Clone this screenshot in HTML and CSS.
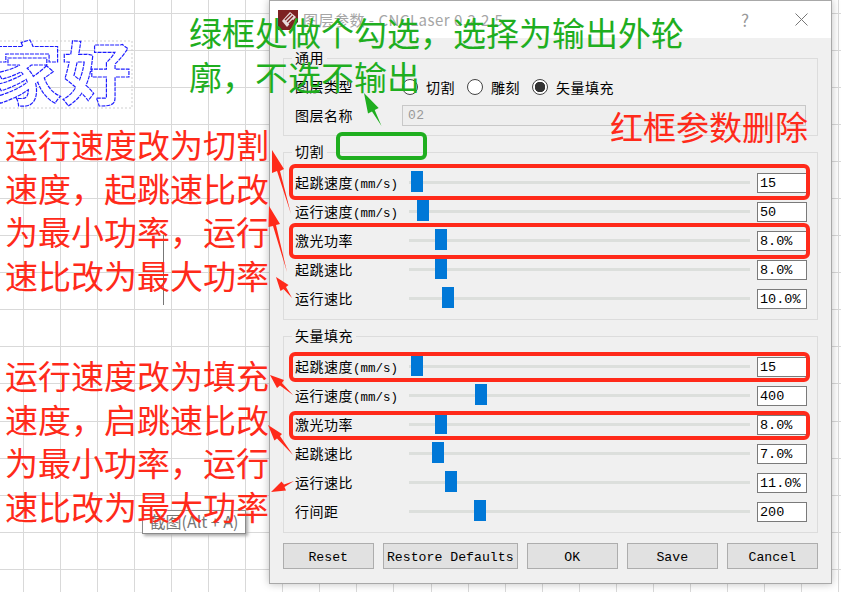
FILE: index.html
```html
<!DOCTYPE html>
<html lang="zh-CN">
<head>
    <meta charset="UTF-8">
    <title>图层参数 - CNCLaser</title>
    <link rel="stylesheet" href="styles.css">
</head>
<body>
    <div class="canvas">
        <svg class="shape" width="140" height="120" viewBox="0 0 140 120">
            <rect class="shape-box" x="-4" y="41" width="136" height="67"></rect>
            <text class="shape-text" x="-7" y="100">家好</text>
        </svg>
        <div class="cursor-line"></div>
        <div class="tip">截图(Alt + A)</div>
    </div>

    <div class="dialog">
        <div class="titlebar">
            <svg class="app-icon" width="20" height="20" viewBox="0 0 20 20">
                <rect width="20" height="20" fill="#7d2222"></rect>
                <path d="M4 11 L12 2 L18 7 L9 17 Z" fill="#e8dcdc"></path>
                <path d="M7 10 L13 4 M9 12 L15 6 M11 14 L15 10" stroke="#7d2222" stroke-width="1.4"></path>
                <path d="M20 12 L20 20 L12 20 Z" fill="#fff"></path>
            </svg>
            <span class="title">图层参数 - CNCLaser 0.2.2.5</span>
            <span class="help">?</span>
            <svg class="close" width="13" height="13" viewBox="0 0 13 13">
                <path d="M.5 .5 L12.5 12.5 M12.5 .5 L.5 12.5" stroke="#777" fill="none"></path>
            </svg>
        </div>

        <div class="body">
            <div class="group group-general">
                <span class="legend">通用</span>
                <div class="row">
                    <span class="label">图层类型</span>
                    <div class="radios">
                        <span class="radio"></span><span>切割</span>
                        <span class="radio"></span><span>雕刻</span>
                        <span class="radio checked"></span><span>矢量填充</span>
                    </div>
                </div>
                <div class="row">
                    <span class="label">图层名称</span>
                    <div class="name-input">02</div>
                </div>
            </div>

            <div class="group">
                <span class="legend">切割</span>
                <div class="row">
                    <span class="label">起跳速度<span class="mono">(mm/s)</span></span>
                    <div class="track"><div class="handle" style="left: 2px"></div></div>
                    <div class="value">15</div>
                </div>
                <div class="row">
                    <span class="label">运行速度<span class="mono">(mm/s)</span></span>
                    <div class="track"><div class="handle" style="left: 8px"></div></div>
                    <div class="value">50</div>
                </div>
                <div class="row">
                    <span class="label">激光功率</span>
                    <div class="track"><div class="handle" style="left: 26px"></div></div>
                    <div class="value">8.0%</div>
                </div>
                <div class="row">
                    <span class="label">起跳速比</span>
                    <div class="track"><div class="handle" style="left: 26px"></div></div>
                    <div class="value">8.0%</div>
                </div>
                <div class="row">
                    <span class="label">运行速比</span>
                    <div class="track"><div class="handle" style="left: 33px"></div></div>
                    <div class="value">10.0%</div>
                </div>
            </div>

            <div class="group">
                <span class="legend">矢量填充</span>
                <div class="row">
                    <span class="label">起跳速度<span class="mono">(mm/s)</span></span>
                    <div class="track"><div class="handle" style="left: 2px"></div></div>
                    <div class="value">15</div>
                </div>
                <div class="row">
                    <span class="label">运行速度<span class="mono">(mm/s)</span></span>
                    <div class="track"><div class="handle" style="left: 66px"></div></div>
                    <div class="value">400</div>
                </div>
                <div class="row">
                    <span class="label">激光功率</span>
                    <div class="track"><div class="handle" style="left: 26px"></div></div>
                    <div class="value">8.0%</div>
                </div>
                <div class="row">
                    <span class="label">起跳速比</span>
                    <div class="track"><div class="handle" style="left: 23px"></div></div>
                    <div class="value">7.0%</div>
                </div>
                <div class="row">
                    <span class="label">运行速比</span>
                    <div class="track"><div class="handle" style="left: 36px"></div></div>
                    <div class="value">11.0%</div>
                </div>
                <div class="row">
                    <span class="label">行间距</span>
                    <div class="track"><div class="handle" style="left: 65px"></div></div>
                    <div class="value">200</div>
                </div>
            </div>

            <div class="buttons">
                <button class="btn">Reset</button>
                <button class="btn btn-wide">Restore Defaults</button>
                <button class="btn">OK</button>
                <button class="btn">Save</button>
                <button class="btn">Cancel</button>
            </div>
        </div>
    </div>

    <!-- annotations drawn over the screenshot -->
    <div class="note green note-top">绿框处做个勾选，选择为输出外轮<br>廓，不选不输出</div>
    <div class="note red note-delete">红框参数删除</div>
    <div class="note red note-cut">运行速度改为切割<br>速度，起跳速比改<br>为最小功率，运行<br>速比改为最大功率</div>
    <div class="note red note-fill">运行速度改为填充<br>速度，启跳速比改<br>为最小功率，运行<br>速比改为最大功率</div>

    <div class="mark mark-green"></div>
    <div class="mark mark-red mark-1"></div>
    <div class="mark mark-red mark-2"></div>
    <div class="mark mark-red mark-3"></div>
    <div class="mark mark-red mark-4"></div>

    <svg class="arrows" width="841" height="592" viewBox="0 0 841 592">
        <polygon class="arrow-green" points="364,93 378.7,108 374.7,110 381.5,126 372,111.4 368,113.5"></polygon>
        <polygon class="arrow-red" points="272,150 284,169 280,171 291,214 277,171 272,173"></polygon>
        <polygon class="arrow-red" points="269,206 280,224 276,225 287,272 273,226 268.5,227"></polygon>
        <polygon class="arrow-red" points="276,277 288.5,285 286,287 292,298 283.5,289 280.5,291"></polygon>
        <polygon class="arrow-red" points="270,375 284,380 282,383 293,395 280,385.5 277,388"></polygon>
        <polygon class="arrow-red" points="268,425 282,434 280,436 293,455 277,438.5 274.4,440.5"></polygon>
        <polygon class="arrow-red" points="271,492 281.5,481.5 284,484.5 294,481 284.5,487 286,490.5"></polygon>
    </svg>
</body>
</html>
```

FILE: styles.css
```css
html, body{
    margin: 0;
    height: 100%;
}

body{
    position: relative;
    width: 841px;
    height: 592px;
    overflow: hidden;
    background: #fff;
    font-family: "Noto Sans CJK SC", sans-serif;
}

.canvas{
    position: absolute;
    inset: 0;
    background-image:
        repeating-linear-gradient(to right, #d9d9d9 0, #d9d9d9 1px, transparent 1px, transparent 37.05px),
        repeating-linear-gradient(to bottom, #d9d9d9 0, #d9d9d9 1px, transparent 1px, transparent 37.05px);
    background-position: 23px 13px;
}

.shape{
    position: absolute;
    left: 0;
    top: 0;
}

.shape-box{
    fill: none;
    stroke: #cfcfcf;
    stroke-dasharray: 2 2;
}

.shape-text{
    font-family: "Noto Sans CJK SC", sans-serif;
    font-size: 69px;
    font-weight: 700;
    fill: #fff;
    stroke: #1c1cff;
    stroke-width: 1.2;
    stroke-dasharray: 4 1;
}

.cursor-line{
    position: absolute;
    left: 163px;
    top: 235px;
    width: 1px;
    height: 70px;
    background: #777;
}

.tip{
    position: absolute;
    left: 142px;
    top: 510px;
    width: 104px;
    height: 24px;
    box-sizing: border-box;
    background: #fff;
    border: 1px solid #8a8a8a;
    box-shadow: 2px 2px 3px #aaa;
    font-size: 16px;
    line-height: 21px;
    color: #777;
    text-align: center;
    white-space: nowrap;
}

/* dialog */
.dialog{
    position: absolute;
    left: 269px;
    top: 0;
    width: 563px;
    height: 584px;
    box-sizing: border-box;
    border: 1px solid #a8a8a8;
    background: #f0f0f0;
    box-shadow: 0 0 8px rgba(0, 0, 0, 0.25);
}

.titlebar{
    display: flex;
    align-items: center;
    height: 37px;
    padding: 0 23px 0 8px;
    background: #fff;
}

.app-icon{
    margin-right: 5px;
}

.title{
    flex: 1;
    font-size: 15px;
    letter-spacing: 0.5px;
    color: #a5a5a5;
}

.help{
    margin-right: 46px;
    font-size: 17px;
    color: #999;
}

.body{
    padding: 20px 13px 0;
}

.group{
    position: relative;
    margin-bottom: 16px;
    padding: 15px 0 6px;
    border: 1px solid #dcdcdc;
}

.group-general{
    height: 78px;
    box-sizing: border-box;
    padding-top: 13px;
}

.legend{
    position: absolute;
    left: 8px;
    top: -12px;
    padding: 0 3px;
    background: #f0f0f0;
    font-size: 14px;
    line-height: 20px;
    letter-spacing: 0.5px;
}

.row{
    display: flex;
    align-items: center;
    height: 29px;
    padding-left: 11px;
    font-size: 14px;
    letter-spacing: 0.5px;
}

.label{
    width: 114px;
    padding-bottom: 2px;
    white-space: nowrap;
}

.group-general .label{
    width: 107px;
}

.mono{
    font-family: "Liberation Mono", monospace;
    font-size: 12.5px;
    letter-spacing: 0;
}

.radios{
    display: flex;
    align-items: center;
    gap: 8px;
}

.radio{
    width: 14px;
    height: 14px;
    border: 1px solid #444;
    border-radius: 50%;
    background: #fff;
}

.radios span:nth-child(3), .radios span:nth-child(5){
    margin-left: 4px;
}

.radio.checked{
    background: radial-gradient(circle, #333 0, #333 5px, #fff 5.5px);
}

.name-input{
    width: 404px;
    height: 21px;
    box-sizing: border-box;
    padding-left: 5px;
    border: 1px solid #c8c8c8;
    background: #eee;
    font-family: "Liberation Mono", monospace;
    font-size: 13px;
    line-height: 19px;
    color: #999;
}

.track{
    position: relative;
    width: 341px;
    height: 3px;
    margin-right: 7px;
    background: #dcdfdc;
}

.handle{
    position: absolute;
    top: -10px;
    width: 12px;
    height: 21px;
    background: #0078d7;
}

.value{
    width: 50px;
    height: 20px;
    box-sizing: border-box;
    padding-left: 2px;
    border: 1px solid #7a7a7a;
    background: #fff;
    font-family: "Liberation Mono", monospace;
    font-size: 13.5px;
    line-height: 19px;
    letter-spacing: 0;
}

.buttons{
    display: flex;
    gap: 9.5px;
    margin-top: -6px;
}

.btn{
    width: 90.5px;
    height: 26px;
    padding: 2px 0 0;
    border: 1px solid #adadad;
    background: #e1e1e1;
    font-family: "Liberation Mono", monospace;
    font-size: 13.2px;
    color: #000;
}

.btn-wide{
    width: 134.5px;
}

/* annotations */
.note{
    position: absolute;
    font-size: 33px;
    line-height: 43.5px;
    white-space: nowrap;
}

.red{
    color: #ff2a1a;
}

.green{
    color: #1fae1f;
}

.note-top{
    left: 189px;
    top: 11px;
}

.note-delete{
    left: 610px;
    top: 105px;
}

.note-cut{
    left: 5px;
    top: 123px;
}

.note-fill{
    left: 5px;
    top: 354px;
}

.mark{
    position: absolute;
    box-sizing: border-box;
    border-radius: 6px;
}

.mark-green{
    left: 336px;
    top: 132px;
    width: 91px;
    height: 28px;
    border: 4px solid #1fae1f;
}

.mark-red{
    left: 289px;
    width: 521px;
    border: 4px solid #ff2a1a;
}

.mark-1{
    top: 164px;
    height: 36px;
}

.mark-2{
    top: 223px;
    height: 36px;
}

.mark-3{
    top: 352px;
    height: 30px;
}

.mark-4{
    top: 411px;
    height: 29px;
}

.arrows{
    position: absolute;
    left: 0;
    top: 0;
}

.arrow-red{
    fill: #ff2a1a;
}

.arrow-green{
    fill: #1fae1f;
}
```
